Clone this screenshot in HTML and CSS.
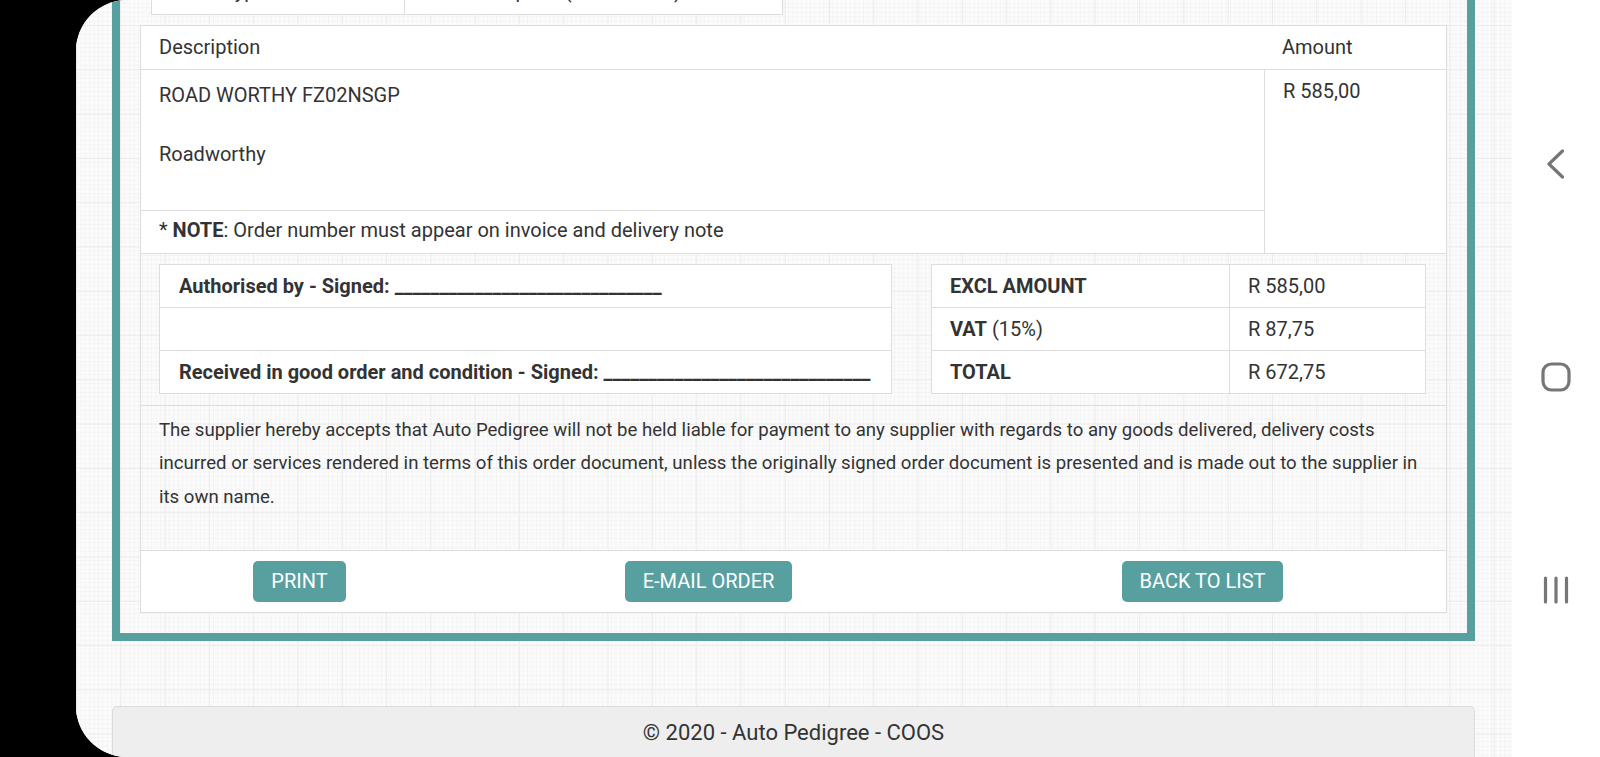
FILE: index.html
```html
<!DOCTYPE html>
<html lang="en">
<head>
<meta charset="utf-8">
<title>Order - Auto Pedigree COOS</title>
<link rel="stylesheet" href="styles.css">
</head>
<body>
<div class="device">
  <div class="bezel"></div>
  <div class="screen">
    <main class="app">
      <section class="frame">
        <div class="info-table">
          <div class="info-cell">Order Type</div>
          <div class="info-cell info-cell-wide">Vehicle Repairs (Mechanical)</div>
        </div>
        <div class="card">
          <div class="items">
            <div class="cell head">Description</div>
            <div class="cell head amt-head">Amount</div>
            <div class="cell desc">
              <div>ROAD WORTHY FZ02NSGP</div>
              <div class="desc-sub">Roadworthy</div>
            </div>
            <div class="cell amt">R 585,00</div>
            <div class="cell note">* <strong>NOTE</strong>: Order number must appear on invoice and delivery note</div>
          </div>
          <div class="sign-section">
            <div class="box sign-box">
              <div class="box-row"><strong>Authorised by - Signed: ______________________________</strong></div>
              <div class="box-row"></div>
              <div class="box-row"><strong>Received in good order and condition - Signed: ______________________________</strong></div>
            </div>
            <div class="box totals">
              <div class="box-row t-row"><div class="t-label"><span><strong>EXCL AMOUNT</strong></span></div><div class="t-val">R 585,00</div></div>
              <div class="box-row t-row"><div class="t-label"><span><strong>VAT</strong> (15%)</span></div><div class="t-val">R 87,75</div></div>
              <div class="box-row t-row"><div class="t-label"><span><strong>TOTAL</strong></span></div><div class="t-val">R 672,75</div></div>
            </div>
          </div>
          <div class="disclaimer">
            <p>The supplier hereby accepts that Auto Pedigree will not be held liable for payment to any supplier with regards to any goods delivered, delivery costs incurred or services rendered in terms of this order document, unless the originally signed order document is presented and is made out to the supplier in its own name.</p>
          </div>
          <div class="actions">
            <div class="action"><button class="btn" type="button">PRINT</button></div>
            <div class="action"><button class="btn" type="button">E-MAIL ORDER</button></div>
            <div class="action"><button class="btn" type="button">BACK TO LIST</button></div>
          </div>
        </div>
      </section>
      <footer class="footer">© 2020 - Auto Pedigree - COOS</footer>
    </main>
    <nav class="sysnav" aria-label="System navigation">
      <svg class="nav-icon" viewBox="0 0 30 30" aria-hidden="true"><polyline points="21.5,2 8,15 21.5,28" /></svg>
      <svg class="nav-icon" viewBox="0 0 30 30" aria-hidden="true"><rect x="2" y="2" width="26" height="26" rx="8.5" ry="8.5" /></svg>
      <svg class="nav-icon" viewBox="0 0 30 30" aria-hidden="true"><line x1="4.5" y1="3" x2="4.5" y2="27" /><line x1="15" y1="3" x2="15" y2="27" /><line x1="25.5" y1="3" x2="25.5" y2="27" /></svg>
    </nav>
  </div>
</div>
</body>
</html>
```

FILE: styles.css
```css
* {
  box-sizing: border-box;
}

html, body {
  margin: 0;
  padding: 0;
}

body {
  width: 1600px;
  height: 757px;
  overflow: hidden;
  background: #000;
  font-family: Roboto, "Liberation Sans", sans-serif;
  font-size: 20px;
  line-height: 28px;
  color: #333;
}

.device {
  display: flex;
  width: 1600px;
  height: 757px;
}

.bezel {
  flex: 0 0 76px;
  background: #000;
}

.screen {
  flex: 1 1 auto;
  display: flex;
  height: 757px;
  overflow: hidden;
  border-radius: 51px 0 0 51px;
  background-color: #fff;
}

.app {
  flex: 0 0 1436px;
  height: 757px;
  overflow: hidden;
  padding-left: 36px;
  background-color: #fbfbfb;
  background-image:
    linear-gradient(#ececec 1px, transparent 1px),
    linear-gradient(90deg, #ececec 1px, transparent 1px),
    linear-gradient(rgba(0, 0, 0, 0.022) 1px, transparent 1px),
    linear-gradient(90deg, rgba(0, 0, 0, 0.022) 1px, transparent 1px);
  background-size: 44.3px 44.3px, 44.3px 44.3px, 4.43px 4.43px, 4.43px 4.43px;
  background-position: 0 25px, 0 0, 0 25px, 0 0;
}

.frame {
  width: 1363px;
  margin-top: -49px;
  padding: 20px 20px 20px;
  border: 8px solid #589f9f;
  border-top: 0;
}

/* partially scrolled-off info table */
.info-table {
  display: grid;
  grid-template-columns: 252px 380px;
  width: 632px;
  height: 44px;
  margin-left: 11px;
  background: #fff;
  border: 1px solid #ddd;
}

.info-cell {
  padding: 5px 18px 0;
  white-space: nowrap;
}

.info-cell-wide {
  border-left: 1px solid #ddd;
}

.card {
  margin-top: 10px;
  border: 1px solid #ddd;
}

/* line items */
.items {
  display: grid;
  grid-template-columns: 1fr 182px;
  grid-template-rows: 44px 141px 42px;
  background: #fff;
  border-bottom: 1px solid #ddd;
}

.cell {
  padding: 0 18px;
}

.head {
  padding-top: 7px;
  border-bottom: 1px solid #ddd;
}

.desc {
  padding-top: 11px;
  border-bottom: 1px solid #ddd;
}

.desc-sub {
  margin-top: 31px;
}

.amt {
  grid-column: 2;
  grid-row: 2 / span 2;
  padding-top: 6.5px;
  border-left: 1px solid #ddd;
}

.note {
  padding-top: 5px;
}

/* signatures and totals */
.sign-section {
  display: grid;
  grid-template-columns: 733px 495px;
  column-gap: 39px;
  padding: 10px 0 11px 18px;
  border-bottom: 1px solid #ddd;
}

.box {
  background: #fff;
  border: 1px solid #ddd;
}

.box-row {
  display: flex;
  align-items: center;
  height: 43px;
  padding: 0 19px;
  border-bottom: 1px solid #ddd;
  white-space: nowrap;
}

.box-row:last-child {
  height: 42px;
  border-bottom: 0;
}

.t-row {
  display: grid;
  grid-template-columns: 297px 1fr;
  align-items: stretch;
  padding: 0;
}

.t-label,
.t-val {
  display: flex;
  align-items: center;
  padding: 0 18px;
}

.t-val {
  border-left: 1px solid #ddd;
}

strong {
  font-weight: 700;
}

/* disclaimer */
.disclaimer {
  padding: 8px 18px 36px;
  border-bottom: 1px solid #ddd;
  font-size: 18.6px;
  line-height: 33.33px;
}

.disclaimer p {
  margin: 0;
}

/* action buttons */
.actions {
  display: grid;
  grid-template-columns: 317px 501px 1fr;
  padding: 10px 0;
  background: #fff;
}

.action {
  display: flex;
  justify-content: center;
}

.btn {
  height: 41px;
  padding: 0 18px;
  border: 0;
  border-radius: 5px;
  background: #589f9f;
  color: #fff;
  font-family: Roboto, "Liberation Sans", sans-serif;
  font-size: 20px;
  line-height: 41px;
}

/* footer */
.footer {
  width: 1363px;
  height: 80px;
  margin-top: 65px;
  padding-top: 12px;
  background: #eeeeee;
  border: 1px solid #dcdcdc;
  border-radius: 5px 5px 0 0;
  font-size: 22px;
  text-align: center;
}

/* Android system navigation */
.sysnav {
  flex: 0 0 88px;
  display: flex;
  flex-direction: column;
  align-items: center;
  justify-content: center;
  gap: 183px;
  padding-bottom: 4px;
  background: #fff;
}

.nav-icon {
  width: 30px;
  height: 30px;
  fill: none;
  stroke: #767676;
  stroke-width: 3.2;
  stroke-linecap: round;
  stroke-linejoin: round;
}
```
